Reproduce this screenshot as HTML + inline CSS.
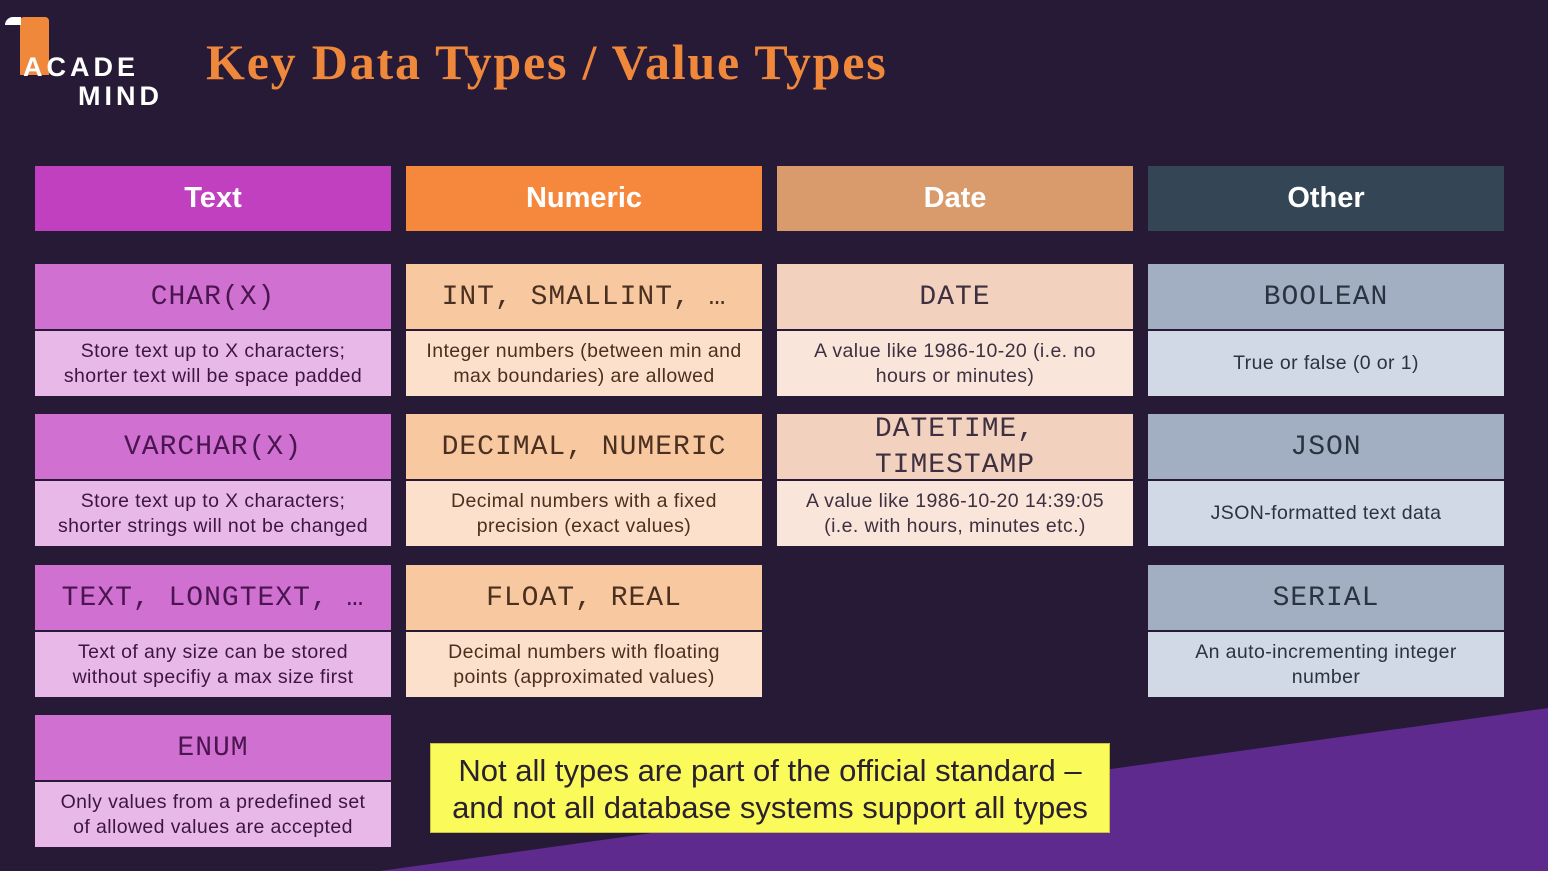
<!DOCTYPE html><html><head><style>
*{margin:0;padding:0;box-sizing:border-box}
body{width:1548px;height:871px;overflow:hidden;background:#261a36;position:relative;font-family:"Liberation Sans",sans-serif}
.abs{position:absolute}
.h{position:absolute;top:166px;width:356px;height:65px;color:#fff;font-weight:bold;font-size:29px;display:flex;align-items:center;justify-content:center}
.c{position:absolute;width:356px;height:132px}
.t{height:65px;display:flex;align-items:center;justify-content:center;font-family:"Liberation Mono",monospace;font-size:28px;letter-spacing:1px;text-align:center;line-height:36px;padding-top:3px}
.b{height:65px;margin-top:2px;display:flex;align-items:center;justify-content:center;text-align:center;font-size:19.5px;letter-spacing:0.4px;line-height:25px;padding:0 4px;white-space:nowrap}
.p .t{background:#d070d0;color:#4a1550}.p .b{background:#e8b8e8;color:#3c1640}
.o .t{background:#f8c8a0;color:#4a3020}.o .b{background:#fce0cc;color:#4a3020}
.d .t{background:#f2d2be;color:#3e3040}.d .b{background:#f9e5da;color:#3e3040}
.g .t{background:#a2afc2;color:#2a3340}.g .b{background:#d1d8e6;color:#2a3340}
</style></head><body>
<svg class="abs" style="left:0;top:0" width="1548" height="871"><polygon points="380,871 1548,708 1548,871" fill="#5e2a8e"/></svg>
<div class="abs" style="left:20px;top:17px;width:29px;height:58px;background:#f0883c;border-radius:4px 4px 0 0"></div>
<div class="abs" style="left:5px;top:17px;width:16px;height:8px;background:#fff;border-radius:8px 0 0 0"></div>
<div class="abs" style="left:23px;top:52px;color:#fff;font-weight:bold;font-size:27px;letter-spacing:4px">ACADE</div>
<div class="abs" style="left:78px;top:81px;color:#fff;font-weight:bold;font-size:27px;letter-spacing:4px">MIND</div>
<div class="abs" style="left:206px;top:33px;color:#f0883c;font-family:'Liberation Serif',serif;font-weight:bold;font-size:50px;letter-spacing:1.8px">Key Data Types / Value Types</div>
<div class="h" style="left:35px;background:#c040c0">Text</div>
<div class="h" style="left:406px;background:#f5883c">Numeric</div>
<div class="h" style="left:777px;background:#d99a6c">Date</div>
<div class="h" style="left:1148px;background:#344556">Other</div>

<div class="c p" style="left:35px;top:264px"><div class="t">CHAR(X)</div><div class="b">Store text up to X characters;<br>shorter text will be space padded</div></div>
<div class="c p" style="left:35px;top:414px"><div class="t">VARCHAR(X)</div><div class="b">Store text up to X characters;<br>shorter strings will not be changed</div></div>
<div class="c p" style="left:35px;top:565px"><div class="t">TEXT, LONGTEXT, …</div><div class="b">Text of any size can be stored<br>without specifiy a max size first</div></div>
<div class="c p" style="left:35px;top:715px"><div class="t">ENUM</div><div class="b">Only values from a predefined set<br>of allowed values are accepted</div></div>

<div class="c o" style="left:406px;top:264px"><div class="t">INT, SMALLINT, …</div><div class="b">Integer numbers (between min and<br>max boundaries) are allowed</div></div>
<div class="c o" style="left:406px;top:414px"><div class="t">DECIMAL, NUMERIC</div><div class="b">Decimal numbers with a fixed<br>precision (exact values)</div></div>
<div class="c o" style="left:406px;top:565px"><div class="t">FLOAT, REAL</div><div class="b">Decimal numbers with floating<br>points (approximated values)</div></div>

<div class="c d" style="left:777px;top:264px"><div class="t">DATE</div><div class="b">A value like 1986-10-20 (i.e. no<br>hours or minutes)</div></div>
<div class="c d" style="left:777px;top:414px"><div class="t">DATETIME,<br>TIMESTAMP</div><div class="b">A value like 1986-10-20 14:39:05<br>(i.e. with hours, minutes etc.)</div></div>

<div class="c g" style="left:1148px;top:264px"><div class="t">BOOLEAN</div><div class="b">True or false (0 or 1)</div></div>
<div class="c g" style="left:1148px;top:414px"><div class="t">JSON</div><div class="b">JSON-formatted text data</div></div>
<div class="c g" style="left:1148px;top:565px"><div class="t">SERIAL</div><div class="b">An auto-incrementing integer<br>number</div></div>

<div class="abs" style="left:430px;top:743px;width:680px;height:90px;background:#fafa5a;border:1px solid #c8c040;color:#2a2030;font-size:31px;line-height:37px;text-align:center;padding-top:8px;white-space:nowrap">Not all types are part of the official standard –<br>and not all database systems support all types</div>
</body></html>
